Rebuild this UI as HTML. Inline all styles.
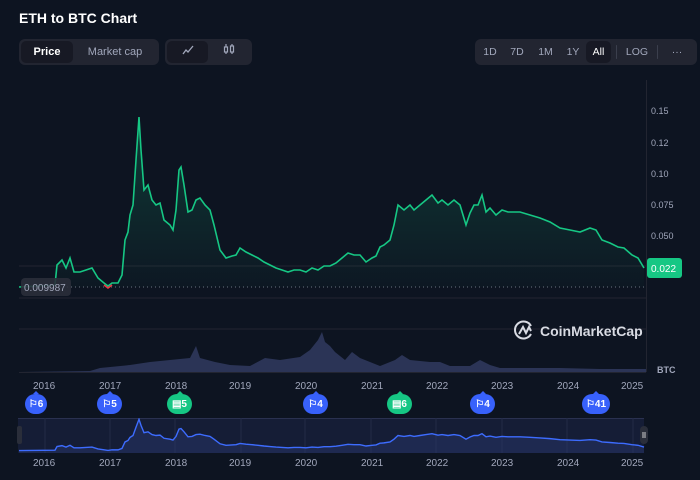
<!DOCTYPE html>
<html><head><meta charset="utf-8"><style>
*{margin:0;padding:0;box-sizing:border-box}
body{width:700px;height:480px;background:#0d1421;font-family:"Liberation Sans",sans-serif;color:#a1a7bb;position:relative;overflow:hidden}
.t{position:absolute;left:19px;top:10px;font-size:14px;font-weight:bold;color:#fff}
.seg{position:absolute;top:39px;height:26px;background:#222531;border-radius:6px;display:flex;align-items:center;padding:2px;font-size:11px}
.seg div{height:22px;line-height:22px;text-align:center;border-radius:5px;color:#a1a7bb}
.seg .a{background:#171924;color:#fff;font-weight:bold}
.pin{position:absolute;top:394px;height:20px;border-radius:10px;color:#fff;font-size:10px;font-weight:bold;display:flex;align-items:center;justify-content:center;gap:3px}
.pin:before{content:"";position:absolute;top:-3px;left:50%;margin-left:-3px;border:3px solid transparent;border-top:0}
.b{background:#3861fb}.b:before{border-bottom-color:#3861fb}
.g{background:#16c784}.g:before{border-bottom-color:#16c784}
</style></head><body>
<div class="t">ETH to BTC Chart</div>
<div class="seg" style="left:19px;width:140px"><div class="a" style="width:52px">Price</div><div style="width:84px">Market cap</div></div>
<div class="seg" style="left:165px;width:87px"><div class="a" style="width:41px"><svg width="12" height="10" viewBox="0 0 12 10"><path d="M1 9L4 5L6 7L11 1" stroke="#a1a7bb" stroke-width="1.3" fill="none"/></svg></div><div style="width:42px"><svg width="12" height="12" viewBox="0 0 12 12"><g stroke="#a1a7bb" stroke-width="1.2" fill="none"><rect x="1.5" y="4" width="3" height="5"/><rect x="7.5" y="3" width="3" height="6"/><path d="M3 1v3M3 9v2M9 1v2M9 9v2"/></g></svg></div></div>
<div class="seg" style="left:475px;width:222px;font-size:10.5px"><div style="width:26px">1D</div><div style="width:28px">7D</div><div style="width:29px">1M</div><div style="width:26px">1Y</div><div class="a" style="width:25px;font-weight:normal">All</div><div style="width:1px;height:14px;background:#3b3f4d;margin:0 5px"></div><div style="width:30px">LOG</div><div style="width:1px;height:14px;background:#3b3f4d;margin:0 5px"></div><div style="width:28px">···</div></div>

<svg style="position:absolute;left:0;top:0" width="700" height="480">
<defs><linearGradient id="gg" x1="0" y1="0" x2="0" y2="1"><stop offset="0" stop-color="#16c784" stop-opacity=".22"/><stop offset="1" stop-color="#16c784" stop-opacity=".02"/></linearGradient>
<path id="pl" d="M19,287 L55,285 57,265 62,260 66,268 70,258 74,272 80,272 86,270 92,268 98,278 104,283 108,286 112,283 118,283 122,275 125,240 128,232 130,215 133,205 136,160 139,117 141,150 144,190 148,185 152,200 156,205 160,203 164,220 170,225 173,230 176,210 179,170 181,167 184,185 188,212 192,210 196,200 200,198 205,205 210,210 214,225 220,250 226,258 232,256 236,255 240,248 246,252 252,255 258,258 264,262 270,265 276,268 282,270 288,272 294,270 300,270 306,272 312,268 318,270 324,266 330,266 336,263 342,258 348,253 354,255 360,255 366,262 372,258 376,256 380,247 384,245 390,240 394,225 398,205 404,210 410,205 414,210 420,205 426,200 432,195 438,203 442,200 448,205 454,200 460,205 466,225 470,213 474,205 478,205 482,195 486,212 490,208 496,215 502,210 508,212 514,212 520,212 530,215 540,218 550,222 560,228 570,230 580,232 590,228 596,230 602,240 610,243 618,247 624,248 632,255 638,258 644,268"/></defs>
<g stroke="#222531" stroke-width="1"><line x1="19" y1="266" x2="646" y2="266"/><line x1="19" y1="298" x2="646" y2="298"/><line x1="19" y1="329" x2="646" y2="329"/><line x1="646.5" y1="80" x2="646.5" y2="372"/><line x1="19" y1="372.5" x2="646" y2="372.5"/></g>
<line x1="19" y1="287" x2="646" y2="287" stroke="#6b7280" stroke-dasharray="1 3"/>
<polygon fill="#2b3456" points="19,372 90,371 100,368 130,365 150,362 170,360 190,358 196,346 200,358 215,362 230,365 250,366 265,358 280,360 300,357 310,350 318,340 322,332 325,342 330,346 335,352 345,360 352,352 360,358 370,362 380,366 395,360 402,355 410,360 430,362 440,362 450,366 470,366 480,360 490,365 500,368 530,368 560,368 600,369 646,369 646,372"/>
<path d="M19,287 L55,285 57,265 62,260 66,268 70,258 74,272 80,272 86,270 92,268 98,278 104,283 108,286 112,283 118,283 122,275 125,240 128,232 130,215 133,205 136,160 139,117 141,150 144,190 148,185 152,200 156,205 160,203 164,220 170,225 173,230 176,210 179,170 181,167 184,185 188,212 192,210 196,200 200,198 205,205 210,210 214,225 220,250 226,258 232,256 236,255 240,248 246,252 252,255 258,258 264,262 270,265 276,268 282,270 288,272 294,270 300,270 306,272 312,268 318,270 324,266 330,266 336,263 342,258 348,253 354,255 360,255 366,262 372,258 376,256 380,247 384,245 390,240 394,225 398,205 404,210 410,205 414,210 420,205 426,200 432,195 438,203 442,200 448,205 454,200 460,205 466,225 470,213 474,205 478,205 482,195 486,212 490,208 496,215 502,210 508,212 514,212 520,212 530,215 540,218 550,222 560,228 570,230 580,232 590,228 596,230 602,240 610,243 618,247 624,248 632,255 638,258 644,268 L644,287 L19,287Z" fill="url(#gg)"/>
<use href="#pl" fill="none" stroke="#16c784" stroke-width="1.6"/>
<path d="M104,285 L108,288 112,285" stroke="#ea3943" stroke-width="1.6" fill="none"/>
<g font-size="9" fill="#a1a7bb" font-family="Liberation Sans"><text x="651" y="114">0.15</text><text x="651" y="146">0.12</text><text x="651" y="177">0.10</text><text x="651" y="208">0.075</text><text x="651" y="239">0.050</text><text x="657" y="373" font-weight="bold">BTC</text></g>
<rect x="647" y="258" width="35" height="20" rx="3" fill="#16c784"/><text x="651" y="272" font-size="10" fill="#fff" font-family="Liberation Sans">0.022</text>
<rect x="21" y="278" width="50" height="18" rx="4" fill="#2a2e3a" opacity=".9"/><text x="24" y="291" font-size="10" fill="#a1a7bb" font-family="Liberation Sans">0.009987</text>
<g transform="translate(515,319)" fill="none" stroke="#d8dbe3" stroke-width="2"><path d="M16 7A8.5 8.5 0 1 0 16 15"/><path d="M4 15L8 8L11 14L14 8L16 12"/></g>
<text x="540" y="336" font-size="14" fill="#d8dbe3" font-family="Liberation Sans" font-weight="bold">CoinMarketCap</text>
<g font-size="10" fill="#a1a7bb" font-family="Liberation Sans"><text x="33" y="389">2016</text><text x="99" y="389">2017</text><text x="165" y="389">2018</text><text x="229" y="389">2019</text><text x="295" y="389">2020</text><text x="361" y="389">2021</text><text x="426" y="389">2022</text><text x="491" y="389">2023</text><text x="557" y="389">2024</text><text x="621" y="389">2025</text></g>
<rect x="18" y="418" width="626" height="35" fill="#151d36"/>
<line x1="18" y1="418.5" x2="644" y2="418.5" stroke="#2a3150"/>
<g stroke="#222a45"><line x1="45" y1="418" x2="45" y2="453"/><line x1="110" y1="418" x2="110" y2="453"/><line x1="175" y1="418" x2="175" y2="453"/><line x1="241" y1="418" x2="241" y2="453"/><line x1="305" y1="418" x2="305" y2="453"/><line x1="371" y1="418" x2="371" y2="453"/><line x1="436" y1="418" x2="436" y2="453"/><line x1="502" y1="418" x2="502" y2="453"/><line x1="567" y1="418" x2="567" y2="453"/><line x1="633" y1="418" x2="633" y2="453"/></g>
<svg x="0" y="418" width="700" height="35" viewBox="0 110 700 190" preserveAspectRatio="none">
<path d="M19,287 L55,285 57,265 62,260 66,268 70,258 74,272 80,272 86,270 92,268 98,278 104,283 108,286 112,283 118,283 122,275 125,240 128,232 130,215 133,205 136,160 139,117 141,150 144,190 148,185 152,200 156,205 160,203 164,220 170,225 173,230 176,210 179,170 181,167 184,185 188,212 192,210 196,200 200,198 205,205 210,210 214,225 220,250 226,258 232,256 236,255 240,248 246,252 252,255 258,258 264,262 270,265 276,268 282,270 288,272 294,270 300,270 306,272 312,268 318,270 324,266 330,266 336,263 342,258 348,253 354,255 360,255 366,262 372,258 376,256 380,247 384,245 390,240 394,225 398,205 404,210 410,205 414,210 420,205 426,200 432,195 438,203 442,200 448,205 454,200 460,205 466,225 470,213 474,205 478,205 482,195 486,212 490,208 496,215 502,210 508,212 514,212 520,212 530,215 540,218 550,222 560,228 570,230 580,232 590,228 596,230 602,240 610,243 618,247 624,248 632,255 638,258 644,268 L644,300 L19,300Z" fill="#2a3a70" fill-opacity=".45"/>
<path d="M19,287 L55,285 57,265 62,260 66,268 70,258 74,272 80,272 86,270 92,268 98,278 104,283 108,286 112,283 118,283 122,275 125,240 128,232 130,215 133,205 136,160 139,117 141,150 144,190 148,185 152,200 156,205 160,203 164,220 170,225 173,230 176,210 179,170 181,167 184,185 188,212 192,210 196,200 200,198 205,205 210,210 214,225 220,250 226,258 232,256 236,255 240,248 246,252 252,255 258,258 264,262 270,265 276,268 282,270 288,272 294,270 300,270 306,272 312,268 318,270 324,266 330,266 336,263 342,258 348,253 354,255 360,255 366,262 372,258 376,256 380,247 384,245 390,240 394,225 398,205 404,210 410,205 414,210 420,205 426,200 432,195 438,203 442,200 448,205 454,200 460,205 466,225 470,213 474,205 478,205 482,195 486,212 490,208 496,215 502,210 508,212 514,212 520,212 530,215 540,218 550,222 560,228 570,230 580,232 590,228 596,230 602,240 610,243 618,247 624,248 632,255 638,258 644,268" fill="none" stroke="#3d6cff" stroke-width="1.4" vector-effect="non-scaling-stroke"/>
</svg>
<rect x="17" y="426" width="5" height="18" rx="2" fill="#2a2e3a"/><rect x="640" y="426" width="8" height="18" rx="4" fill="#2a2e3a"/>
<path d="M643 432v6M645 432v6" stroke="#ccc"/>
<g font-size="10" fill="#a1a7bb" font-family="Liberation Sans"><text x="33" y="466">2016</text><text x="99" y="466">2017</text><text x="165" y="466">2018</text><text x="229" y="466">2019</text><text x="295" y="466">2020</text><text x="361" y="466">2021</text><text x="426" y="466">2022</text><text x="491" y="466">2023</text><text x="557" y="466">2024</text><text x="621" y="466">2025</text></g>
</svg>
<div class="pin b" style="left:25px;width:22px">⚐6</div>
<div class="pin b" style="left:97px;width:25px">⚐5</div>
<div class="pin g" style="left:167px;width:25px">▤5</div>
<div class="pin b" style="left:303px;width:25px">⚐4</div>
<div class="pin g" style="left:387px;width:25px">▤6</div>
<div class="pin b" style="left:470px;width:25px">⚐4</div>
<div class="pin b" style="left:582px;width:28px">⚐41</div>
</body></html>
